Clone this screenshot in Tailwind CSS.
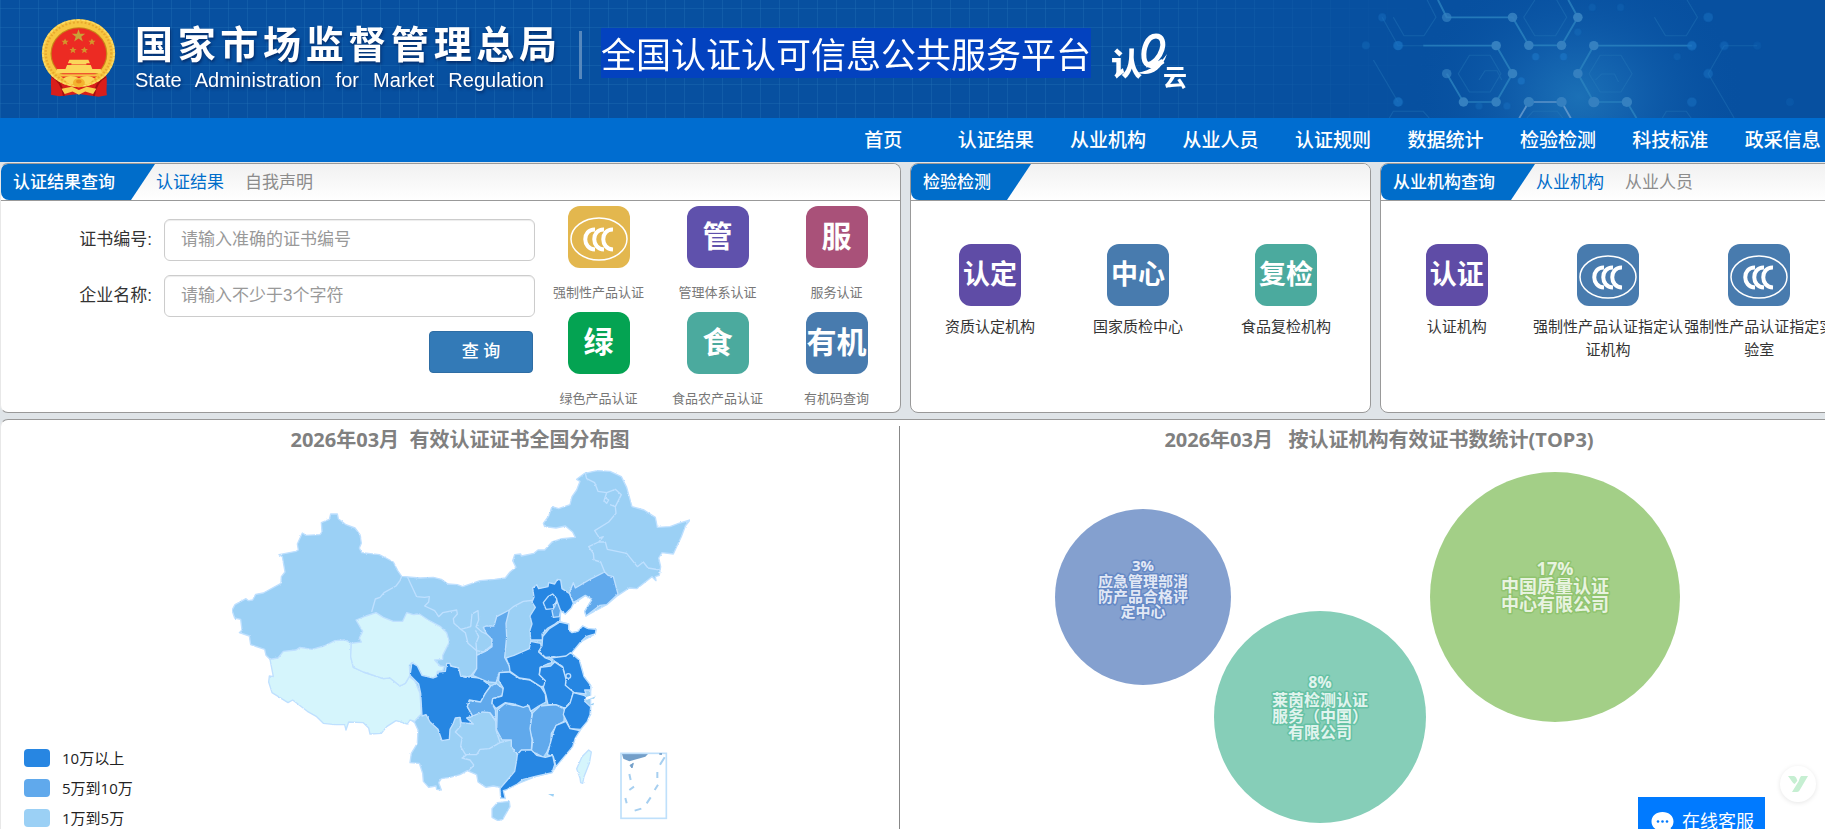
<!DOCTYPE html>
<html lang="zh-CN">
<head>
<meta charset="utf-8">
<meta name="viewport" content="width=device-width, initial-scale=1">
<title>全国认证认可信息公共服务平台</title>
<script src="https://cdn.jsdelivr.net/npm/@tailwindcss/browser@4"></script>
</head>
<body class="bg-[#dfe4e8] font-['Liberation_Sans','Noto_Sans_CJK_SC',sans-serif] text-[#333]">
<svg class="hidden" aria-hidden="true">
  <symbol id="ccc" viewBox="0 0 62 62">
    <g fill="none" stroke="#fff">
      <ellipse cx="31" cy="33" rx="28" ry="21" stroke-width="1.5"/>
      <path d="M27 23.5C14 23 14 43 27 43.500M36 23.500C23 23 23 43 36 43.500M45 23.500C32 23 32 43 45 43.500" stroke-width="4"/>
    </g>
  </symbol>
</svg>
<div class="h-screen overflow-hidden">
<div class="-mr-[14px] flex h-full flex-col">

  <header class="relative h-[118px] shrink-0 overflow-hidden bg-[#0750a0]">
    <svg class="absolute inset-0 h-full w-full" aria-hidden="true">
      <defs>
        <pattern id="grid" width="19" height="19" patternUnits="userSpaceOnUse" y="8"><path d="M0 .5H19M.5 0V19" stroke="#2573b8" stroke-opacity=".35" fill="none"/></pattern>
        <linearGradient id="fade"><stop offset=".6" stop-color="#fff"/><stop offset=".78" stop-color="#000"/></linearGradient>
        <mask id="gridMask"><rect width="100%" height="100%" fill="url(#fade)"/></mask>
      </defs>
      <rect width="100%" height="100%" fill="url(#grid)" mask="url(#gridMask)"/>
    </svg>
    <svg class="absolute top-0 right-[14px] h-[118px] w-[625px]" viewBox="0 0 1568 354" preserveAspectRatio="none" aria-hidden="true">
      <defs><radialGradient id="glow" gradientUnits="userSpaceOnUse" cx="950" cy="290" r="420"><stop offset="0" stop-color="#1b70b6"/><stop offset=".35" stop-color="#115fac"/><stop offset="1" stop-color="#0750a0" stop-opacity="0"/></radialGradient></defs>
      <rect width="1568" height="354" fill="url(#glow)"/>
      <g fill="none" stroke="#2b83c0" stroke-width="5" opacity=".8">
        <path d="M597 0L619 52H784L825 136H907L948 52L924 0"/>
        <path d="M560 137H743L784 221L743 306H661L619 221"/>
        <path d="M1234 137H988L948 221L988 306H1071L1095 354"/>
        <path d="M801 354L825 306H907L930 354" stroke="#6d9fd0"/>
      </g>
      <g fill="none" stroke="#2b7dbe" stroke-width="3" opacity=".35">
        <path d="M676 166H728L755 221L728 276H676L648 221ZM1004 166H1056L1084 221L1056 276H1004L976 221ZM812 52L840 0M812 52L840 107H892L920 52L895 0M485 52L512 107H562L592 52L570 0M1140 52L1168 107H1220L1248 52L1222 0M457 52L497 137H560M435 180L497 306M1315 137L1275 221L1340 354M1315 137H1398M820 354L836 334H896L910 354M475 354L485 334H560L575 354M1160 354L1170 334H1220L1232 354M700 240L715 212H745L757 240M992 240L1008 222H1040L1050 246"/>
      </g>
      <g fill="#3580c0">
        <ellipse cx="619" cy="52" rx="12" ry="14" opacity=".7"/><ellipse cx="784" cy="52" rx="12" ry="14" opacity=".9"/><ellipse cx="948" cy="52" rx="12" ry="14"/><ellipse cx="825" cy="136" rx="12" ry="14"/><ellipse cx="907" cy="136" rx="12" ry="14"/>
        <ellipse cx="743" cy="137" rx="12" ry="14"/><ellipse cx="784" cy="221" rx="12" ry="14"/><ellipse cx="743" cy="306" rx="12" ry="14"/><ellipse cx="661" cy="306" rx="12" ry="14"/><ellipse cx="619" cy="221" rx="12" ry="14" opacity=".7"/>
        <ellipse cx="988" cy="137" rx="12" ry="14"/><ellipse cx="948" cy="221" rx="12" ry="14"/><ellipse cx="988" cy="306" rx="14" ry="16"/><ellipse cx="1071" cy="306" rx="13" ry="15"/><ellipse cx="825" cy="306" rx="13" ry="15"/><ellipse cx="907" cy="306" rx="13" ry="15"/>
      </g>
      <g fill="#1c75c4" opacity=".7">
        <ellipse cx="497" cy="137" rx="12" ry="14"/><ellipse cx="497" cy="306" rx="12" ry="14"/><ellipse cx="457" cy="52" rx="10" ry="12" opacity=".6"/><ellipse cx="416" cy="136" rx="10" ry="12" opacity=".5"/><ellipse cx="1234" cy="137" rx="12" ry="14"/><ellipse cx="1275" cy="52" rx="12" ry="14" opacity=".7"/><ellipse cx="1275" cy="221" rx="12" ry="14" opacity=".7"/><ellipse cx="1234" cy="306" rx="12" ry="14" opacity=".7"/><ellipse cx="1315" cy="137" rx="11" ry="13" opacity=".6"/><ellipse cx="1398" cy="137" rx="10" ry="12" opacity=".3"/><ellipse cx="1480" cy="306" rx="10" ry="12" opacity=".3"/><ellipse cx="842" cy="170" rx="9" ry="11"/><ellipse cx="912" cy="170" rx="9" ry="11"/><ellipse cx="806" cy="243" rx="9" ry="11"/><ellipse cx="770" cy="318" rx="9" ry="11" opacity=".6"/><ellipse cx="700" cy="318" rx="9" ry="11" opacity=".5"/><ellipse cx="948" cy="96" rx="9" ry="11" opacity=".5"/><ellipse cx="984" cy="22" rx="9" ry="11" opacity=".4"/><ellipse cx="1055" cy="22" rx="9" ry="11" opacity=".4"/><ellipse cx="1197" cy="170" rx="9" ry="11" opacity=".4"/>
      </g>
    </svg>
    <div class="relative flex h-full items-start pl-[41px]">
      <svg class="mt-[18px] h-[80px] w-[75px] shrink-0" viewBox="104 54 190 242" preserveAspectRatio="none" role="img" aria-label="国徽">
        <path d="M132 222C126 250 132 268 129 286L150 291L200 284L250 292L271 288C268 262 274 250 268 222Z" fill="#d81e1a"/>
        <path d="M132 232C146 240 158 256 162 290M268 232C254 240 242 256 238 290" stroke="#a30f10" stroke-width="5" fill="none"/>
        <ellipse cx="199" cy="160" rx="93" ry="103" fill="#f7c640"/>
        <ellipse cx="199" cy="160" rx="83" ry="93" fill="none" stroke="#e8a92e" stroke-width="6" stroke-dasharray="5 5"/>
        <ellipse cx="199" cy="160" rx="90" ry="100" fill="none" stroke="#fbdc6b" stroke-width="4" stroke-dasharray="9 4"/>
        <ellipse cx="200" cy="162" rx="72" ry="80" fill="#c98418"/>
        <ellipse cx="200" cy="162" rx="69" ry="77" fill="#ec2b23"/>
        <path d="M199 88L203 102H216L206 111L210 125L199 116L188 125L192 111L182 102H195Z" fill="#c8a238"/>
        <g fill="#d3952c"><path d="M165 116L168 123H174L169 128L171 136L165 131L159 136L161 128L156 123H162Z"/><path d="M233 116L236 123H242L237 128L239 136L233 131L227 136L229 128L224 123H230Z"/><path d="M185 141L188 148H194L189 153L191 161L185 156L179 161L181 153L176 148H182Z"/><path d="M214 141L217 148H223L218 153L220 161L214 156L208 161L210 153L205 148H211Z"/></g>
        <path d="M176 180H224L228 191H172ZM181 191H219V195H181ZM170 196H230L234 208H166ZM145 208H255L259 221H141Z" fill="#fbd65a"/>
        <path d="M150 226H250L238 238H162Z" fill="#ec2b23"/>
        <path d="M142 224H258L244 231H156Z" fill="#f6c243"/>
        <path d="M160 238C172 226 186 228 200 236C214 228 228 226 240 238L222 256L200 248L178 256Z" fill="#fbd65a"/>
        <ellipse cx="200" cy="250" rx="15" ry="14" fill="#f3b32e"/><ellipse cx="200" cy="246" rx="7" ry="6" fill="#e9881d"/>
        <path d="M156 268L182 262L200 272L220 262L244 268L236 284L216 276L200 286L184 276L164 284Z" fill="#f9cf4d"/>
      </svg>
      <div class="mt-[21px] ml-[19px] w-[422px] shrink-0 text-white [text-shadow:1px_2px_3px_rgba(0,20,70,.6)]">
        <div class="text-[38px] leading-[48px] font-bold [text-align-last:justify]">国家市场监督管理总局</div>
        <div class="w-[409px] text-[20px] leading-[22px] [text-align-last:justify]">State Administration for Market Regulation</div>
      </div>
      <div class="mt-[31px] ml-[22px] h-[48px] w-[3px] shrink-0 bg-[#5688bd]"></div>
      <h1 class="mt-[28px] ml-[19px] shrink-0 bg-[#0342bf] pt-[6px] text-[35px] leading-[44px] whitespace-nowrap text-white">全国认证认可信息公共服务平台</h1>
      <svg class="mt-[22px] ml-[8px] h-[96px] w-[110px] shrink-0" viewBox="-10 -10 110 96" role="img" aria-label="认e云">
        <text x="2" y="43" font-size="31" font-weight="900" fill="#fff" font-family="'Noto Sans CJK SC',sans-serif">认</text>
        <path d="M24 41C36 41 50 34 58 22C53 37 44 42 36 42Z" fill="#fff"/>
        <path d="M37 33C53 31 60 4 47 4C38 4 34 17 35 26C36 35 45 36 54 29" fill="none" stroke="#fff" stroke-width="5"/>
        <text x="54" y="54" font-size="24" font-weight="700" fill="#fff" font-family="'Noto Sans CJK SC',sans-serif">云</text>
      </svg>
    </div>
  </header>

  <nav class="h-[44px] shrink-0 bg-[#006dd0] pt-[2px]" aria-label="主导航">
    <ul class="ml-auto grid h-full w-[1012px] grid-cols-9 items-center text-center text-[19px] font-medium text-white">
      <li><a href="#">首页</a></li><li><a href="#">认证结果</a></li><li><a href="#">从业机构</a></li><li><a href="#">从业人员</a></li><li><a href="#">认证规则</a></li><li><a href="#">数据统计</a></li><li><a href="#">检验检测</a></li><li><a href="#">科技标准</a></li><li><a href="#">政采信息</a></li>
    </ul>
  </nav>

  <main class="flex min-h-0 flex-1 flex-col gap-[6px] pt-px">
    <div class="grid shrink-0 grid-cols-[901fr_461fr_459fr] gap-[9px]">

      <section class="min-h-[250px] overflow-hidden rounded-lg border border-[#999] border-l-[#e8e8e8] bg-white">
        <div class="flex h-[37px] items-center border-b border-[#999] bg-linear-to-b from-[#f1f1f1] to-white text-[17px]">
          <h2 class="flex h-full items-center rounded-bl-lg bg-[#006dca] pt-px pr-10 pl-3 font-medium text-white [clip-path:polygon(0_0,100%_0,calc(100%-24px)_100%,0_100%)]">认证结果查询</h2>
          <button type="button" class="ml-px pt-px text-[#006dca]">认证结果</button>
          <button type="button" class="ml-[21px] pt-px text-[#8c8c8c]">自我声明</button>
        </div>
        <div class="flex">
          <form class="flex flex-1 flex-col items-end gap-[14px] pt-[18px] pr-1 text-[17px]">
            <div class="flex items-center gap-3"><label for="cert">证书编号:</label><input id="cert" type="text" placeholder="请输入准确的证书编号" class="h-[42px] w-[371px] rounded-md border border-[#ccc] px-4 shadow-[inset_0_1px_1px_rgba(0,0,0,.075)] placeholder:text-[#999]"></div>
            <div class="flex items-center gap-3"><label for="corp">企业名称:</label><input id="corp" type="text" placeholder="请输入不少于3个字符" class="h-[42px] w-[371px] rounded-md border border-[#ccc] px-4 shadow-[inset_0_1px_1px_rgba(0,0,0,.075)] placeholder:text-[#999]"></div>
            <button type="submit" class="mr-[2px] h-[42px] w-[104px] rounded border border-[#2e6da4] bg-[#337ab7] font-medium text-white">查 询</button>
          </form>
          <ul class="grid w-[361px] grid-cols-3 gap-y-[10px] pt-[5px] pr-1 text-center text-[13px] leading-[18px] text-[#777]">
            <li><a href="#" class="flex flex-col items-center gap-4"><span class="flex size-[62px] items-center justify-center rounded-xl bg-[#e3b74e]"><svg class="size-full"><use href="#ccc"/></svg></span>强制性产品认证</a></li>
            <li><a href="#" class="flex flex-col items-center gap-4"><span class="flex size-[62px] items-center justify-center rounded-xl bg-[#5f51ac] text-[30px] font-bold text-white">管</span>管理体系认证</a></li>
            <li><a href="#" class="flex flex-col items-center gap-4"><span class="flex size-[62px] items-center justify-center rounded-xl bg-[#a95179] text-[30px] font-bold text-white">服</span>服务认证</a></li>
            <li><a href="#" class="flex flex-col items-center gap-4"><span class="flex size-[62px] items-center justify-center rounded-xl bg-[#04a352] text-[30px] font-bold text-white">绿</span>绿色产品认证</a></li>
            <li><a href="#" class="flex flex-col items-center gap-4"><span class="flex size-[62px] items-center justify-center rounded-xl bg-[#4baa9e] text-[30px] font-bold text-white">食</span>食品农产品认证</a></li>
            <li><a href="#" class="flex flex-col items-center gap-4"><span class="flex size-[62px] items-center justify-center rounded-xl bg-[#487bae] text-[30px] font-bold text-white">有机</span>有机码查询</a></li>
          </ul>
        </div>
      </section>

      <section class="overflow-hidden rounded-lg border border-[#999] bg-white">
        <div class="flex h-[37px] items-center border-b border-[#999] bg-linear-to-b from-[#f1f1f1] to-white text-[17px]">
          <h2 class="flex h-full items-center rounded-bl-lg bg-[#006dca] pt-px pr-10 pl-3 font-medium text-white [clip-path:polygon(0_0,100%_0,calc(100%-24px)_100%,0_100%)]">检验检测</h2>
        </div>
        <ul class="grid grid-cols-3 pt-[43px] pr-[10px] pl-[5px] text-center text-[15px] leading-[23px]">
          <li><a href="#" class="flex flex-col items-center gap-[9px]"><span class="flex size-[62px] items-center justify-center rounded-xl bg-[#5f4ca6] text-[27px] font-bold text-white">认定</span>资质认定机构</a></li>
          <li><a href="#" class="flex flex-col items-center gap-[9px]"><span class="flex size-[62px] items-center justify-center rounded-xl bg-[#487bae] text-[27px] font-bold text-white">中心</span>国家质检中心</a></li>
          <li><a href="#" class="flex flex-col items-center gap-[9px]"><span class="flex size-[62px] items-center justify-center rounded-xl bg-[#4baa9e] text-[27px] font-bold text-white">复检</span>食品复检机构</a></li>
        </ul>
      </section>

      <section class="overflow-hidden rounded-lg border border-[#999] bg-white">
        <div class="flex h-[37px] items-center border-b border-[#999] bg-linear-to-b from-[#f1f1f1] to-white text-[17px]">
          <h2 class="flex h-full items-center rounded-bl-lg bg-[#006dca] pt-px pr-10 pl-3 font-medium text-white [clip-path:polygon(0_0,100%_0,calc(100%-24px)_100%,0_100%)]">从业机构查询</h2>
          <button type="button" class="ml-px pt-px text-[#006dca]">从业机构</button>
          <button type="button" class="ml-[21px] pt-px text-[#8c8c8c]">从业人员</button>
        </div>
        <ul class="grid grid-cols-3 pt-[43px] pr-[3px] text-center text-[15px] leading-[23px]">
          <li><a href="#" class="flex flex-col items-center gap-[9px]"><span class="flex size-[62px] items-center justify-center rounded-xl bg-[#5f4ca6] text-[27px] font-bold text-white">认证</span>认证机构</a></li>
          <li><a href="#" class="flex flex-col items-center gap-[9px]"><span class="flex size-[62px] items-center justify-center rounded-xl bg-[#487bae]"><svg class="size-full"><use href="#ccc"/></svg></span>强制性产品认证指定认证机构</a></li>
          <li><a href="#" class="flex flex-col items-center gap-[9px]"><span class="flex size-[62px] items-center justify-center rounded-xl bg-[#487bae]"><svg class="size-full"><use href="#ccc"/></svg></span>强制性产品认证指定实验室</a></li>
        </ul>
      </section>
    </div>

    <div class="grid min-h-0 flex-1 grid-cols-[901fr_938fr] overflow-hidden rounded-t-lg border border-b-0 border-[#999] border-l-[#e8e8e8] bg-white">
      <section class="pt-[5px]">
        <h2 class="pl-5 text-center font-['Open_Sans','Noto_Sans_CJK_SC',sans-serif] text-[20px] leading-[30px] font-bold whitespace-pre text-[#808080]">2026年03月  有效认证证书全国分布图</h2>
        <div class="flex">
          <ul class="w-[219px] shrink-0 pt-[288px] pl-[23px] font-['Open_Sans','Noto_Sans_CJK_SC',sans-serif] text-[15px] leading-[30px] text-[#222]">
            <li class="flex items-center gap-3"><span class="h-[18px] w-[26px] rounded bg-[#2786e2]"></span>10万以上</li>
            <li class="flex items-center gap-3"><span class="h-[18px] w-[26px] rounded bg-[#60a9ec]"></span>5万到10万</li>
            <li class="flex items-center gap-3"><span class="h-[18px] w-[26px] rounded bg-[#9bd0f5]"></span>1万到5万</li>
          </ul>
          <svg class="h-[374px] w-[500px] shrink-0" viewBox="0 135 1500 1122" role="img" aria-label="有效认证证书全国分布图">
            <defs><filter id="rough" x="0" y="0" width="1" height="1"><feTurbulence type="fractalNoise" baseFrequency=".14" numOctaves="2" seed="4"/><feDisplacementMap in="SourceGraphic" scale="6" xChannelSelector="R" yChannelSelector="G"/></filter></defs>
            <g filter="url(#rough)" stroke="#bfe0ff" stroke-width="4" stroke-linejoin="round">
              <!-- mainland -->
              <path fill="#9bd0f5" d="M36 601L45 584L78 566L85 572L98 570L107 553L130 549L183 520L184 500L195 486L187 440L177 434L228 424L235 420L232 402L247 369L258 376L300 374L306 366L304 338L328 328L332 312L352 312L355 326L378 344L405 354L420 374L424 400L418 414L425 428L478 434L498 444L520 456L533 482L545 499L600 504L640 502L664 508L684 522L712 524L728 530L780 512L824 508L856 504L870 486L888 472L878 452L884 434L902 432L904 438L942 430L954 420L974 420L996 396L1026 386L1066 382L1058 366L1036 348L1008 354L974 350L970 340L986 318L996 290L1016 296L1050 284L1056 260L1070 240L1080 214L1070 208L1094 190L1132 182L1170 184L1204 200L1220 232L1236 290L1272 300L1306 322L1312 352L1350 350L1376 340L1410 330L1396 348L1384 380L1370 410L1360 432L1326 428L1316 444L1322 470L1318 496L1306 500L1308 512L1296 500L1276 516L1250 536L1228 534L1194 556L1160 584L1098 618L1094 604L1116 568L1096 556L1062 580L1036 612L1022 602L1020 636L1046 642L1046 660L1056 668L1074 664L1088 648L1104 656L1128 658L1126 672L1082 696L1052 728L1078 750L1092 800L1112 826L1112 914L1082 958L1008 1070L996 1088L952 1098L892 1122L848 1134L820 1128L798 1132L774 1116L770 1094L742 1082L720 1094L690 1102L664 1106L656 1118L664 1140L650 1138L648 1128L626 1132L610 1114L608 1090L598 1060L570 1058L574 1030L592 1000L594 960L584 938L400 800L150 748L138 736L134 718L92 704L88 678L58 668L66 660L62 628L44 624Z"/>
              <!-- Tibet, Qinghai -->
              <path fill="#d5f5fc" d="M150 748L160 800L148 798L146 816L156 848L204 878L218 870L262 904L290 920L310 940L345 944L374 944L378 960L386 936L430 938L446 954L450 972L484 970L500 950L528 932L562 942L570 930L584 934L592 924L604 912L600 850L584 812L568 800L556 820L540 828L510 804L490 806L430 786L400 772L392 740L394 700L375 690L345 692L312 708L276 718L240 712L228 720L190 724L174 744Z"/>
              <path fill="#d5f5fc" d="M394 700L424 696L418 684L428 664L408 630L438 618L468 608L490 622L520 634L548 634L560 608L580 614L598 612L625 630L662 650L680 668L688 696L668 736L668 748L644 750L660 768L672 770L668 782L652 784L650 796L640 804L606 796L592 768L576 758L568 766L570 796L556 820L540 828L510 804L490 806L430 786L400 772L392 740Z"/>
              <!-- Sichuan -->
              <path fill="#2786e2" d="M576 758L592 768L606 796L640 804L650 800L656 786L676 784L680 760L690 760L692 768L716 774L722 798L780 804L812 828L796 850L782 876L748 870L742 890L758 918L740 924L760 942L724 938L720 922L706 924L700 940L690 958L688 988L666 992L654 958L630 936L618 914L606 918L602 850L596 822L570 796Z"/>
              <!-- province borders in the west and north -->
              <path fill="none" d="M545 499L540 512L528 528L492 548L480 562L466 567L455 606M562 500L576 530L590 560L614 562L628 560L626 576L614 588L644 602L656 620L668 608L710 600L712 612L700 626L702 640L722 658L752 650L756 612L774 602L776 630L768 650L786 666L816 680L816 706L790 726L770 722L768 700L776 680L766 660M720 656L736 668L744 700L770 722V776L752 798L736 802L722 798M720 922L722 948L706 966L726 984L722 1010L738 1036L726 1044L750 1050L762 1066L746 1082M738 1034L770 1034L780 1018L808 1016L840 998L870 990M826 900L828 960L840 998M758 918L786 904L810 908L828 936"/>
              <g transform="translate(720 0)">
                <path fill="none" d="M376 190L380 206L404 218L414 244L440 248L466 238L484 254L466 290L468 310L446 336L404 362L418 384L430 380L416 396L386 410L400 430L402 450L422 456L434 486M436 396L442 418L500 430L532 470L550 456L564 474L600 480M434 262L446 270L440 280L432 272L440 248M466 290L450 284M416 396H436M148 600L160 590L190 574L226 570"/>
                <g fill="#60a9ec">
                  <path d="M70 652L78 648L102 648L110 620L148 600L138 640L140 680L134 742L148 768L150 786L118 788L108 818L84 816L38 796L50 776L50 736L76 724L96 710L96 688L80 672Z"/>
                  <path d="M328 548L340 518L346 534L390 508L434 486L444 496L460 500L474 552L440 584L420 586L378 618L374 604L396 568L376 556L340 578Z"/>
                  <path d="M92 828L108 820L130 836L126 858L98 866L96 880L106 900L108 932L90 908L66 906L38 918L22 890L28 872L62 876L76 850Z"/>
                  <path d="M218 908L240 888L288 884L314 898L312 934L290 946L274 970L272 1000L260 1028L250 1042L228 1030L214 1026L218 990L208 960Z"/>
                  <path d="M112 900L136 880L160 886L206 888L216 912L210 956L216 990L214 1020L182 1022L172 1034L154 1010L154 990L126 990L110 960Z"/>
                </g>
                <g fill="#2786e2">
                  <path d="M118 788L148 786L180 806L210 810L242 830L256 852L258 876L236 888L212 904L206 886L190 892L160 882L136 878L108 896L96 880L98 866L126 858L130 834L116 812Z"/>
                  <path d="M138 744L162 736L208 716L212 694L242 700L244 712L236 726L256 744L272 750L276 758L262 762L240 772L238 794L256 810L256 828L242 830L208 808L178 804L150 784L148 768Z"/>
                  <path d="M218 534L230 524L236 536L264 530L266 518L284 522L292 508L302 510L306 536L328 550L340 580L334 594L316 612L302 602L300 630L282 644L264 654L246 672L248 690L212 690L210 660L216 642L210 618L226 592L216 576L222 562Z"/>
                  <path d="M300 636L326 642L326 660L336 668L354 664L368 648L384 656L408 658L406 672L390 676L378 680L362 696L334 730L318 740L300 746L282 740L256 742L236 724L246 708L248 680L268 656Z"/>
                  <path d="M272 744L318 738L332 728L358 750L372 800L392 826L392 840L374 840L378 852L344 848L326 844L316 826L318 808L308 770L284 754Z"/>
                  <path d="M284 756L308 772L318 808L316 826L340 846L332 876L314 894L288 884L264 884L258 856L250 832L256 812L238 794L242 772L272 768Z"/>
                  <path d="M340 848L372 856L380 862L374 874L392 890L390 914L382 934L362 958L330 956L320 934L310 914L314 896L330 880Z"/>
                  <path d="M318 934L330 956L360 962L346 984L338 1010L308 1046L288 1070L280 1040L262 1034L272 996L280 966L288 946Z"/>
                  <path d="M172 1034L184 1020L214 1020L230 1036L256 1042L278 1036L284 1064L276 1088L232 1098L190 1108L172 1122L138 1140L130 1142L136 1166L122 1164L120 1136L142 1110L164 1084L170 1050Z"/>
                  <path d="M250 578L264 560L278 552L290 566L290 578L280 584L282 596L258 598Z"/>
                  <circle cx="325" cy="798" r="7"/>
                </g>
                <path fill="#60a9ec" d="M290 570L298 592L302 602L298 620L280 622L276 602L284 590Z"/>
                <path fill="#9bd0f5" d="M96 1196L112 1178L148 1174L150 1190L128 1228L114 1232L96 1222Z"/>
                <path fill="#d5f5fc" d="M386 1020L394 1026L388 1060L372 1100L368 1120L362 1118L360 1104L350 1076L366 1040Z"/>
                <path fill="#fff" stroke="#fff" stroke-width="3" d="M380 862L396 858L392 864L380 868Z"/>
                <path fill="#9bd0f5" stroke="none" d="M264 1152L282 1152L280 1160ZM390 866L404 860L408 856L402 866ZM390 884L402 878L400 886Z"/>
              </g>
            </g>
            <g transform="translate(720 0)">
              <path d="M486 1032H564L556 1040L508 1054L490 1046Z" fill="#739fc9"/>
              <rect x="483" y="1030" width="136" height="195" fill="none" stroke="#bfe0fb" stroke-width="5"/>
              <path d="M510 1066L520 1060L516 1074Z" fill="#739fc9" stroke="#739fc9" stroke-width="3"/>
              <path d="M598 1032H606" stroke="#739fc9" stroke-width="5"/>
              <path d="M508 1092L512 1110M508 1140L522 1130M496 1164L500 1180M524 1202L544 1196M560 1180L572 1162M584 1140L594 1124M592 1104V1086M600 1064L614 1042" fill="none" stroke="#a6cff0" stroke-width="6"/>
            </g>
          </svg>
        </div>
      </section>

      <section class="mt-[6px] border-l border-[#888]">
        <h2 class="-mt-px pl-5 text-center font-['Open_Sans','Noto_Sans_CJK_SC',sans-serif] text-[20px] leading-[30px] font-bold whitespace-pre text-[#808080]">2026年03月   按认证机构有效证书数统计(TOP3)</h2>
        <svg class="h-[374px] w-[938px]" viewBox="901 455 938 374" role="img" aria-label="按认证机构有效证书数统计">
          <circle cx="1144" cy="597" r="88" fill="#84a0cf"/>
          <circle cx="1321" cy="717" r="106" fill="#86ceb8"/>
          <circle cx="1556" cy="597" r="125" fill="#a3cf87"/>
          <g class="font-['Open_Sans','Noto_Sans_CJK_SC',sans-serif] font-bold" text-anchor="middle" stroke-width="3" paint-order="stroke" stroke-linejoin="round">
            <g font-size="15" fill="#e2e8f5" stroke="#6589c6"><text x="1144" y="571">3%</text><text x="1144" y="587">应急管理部消</text><text x="1144" y="602">防产品合格评</text><text x="1144" y="617">定中心</text></g>
            <g font-size="16" fill="#e1f4ee" stroke="#66c2a5"><text x="1321" y="688">8%</text><text x="1321" y="706">莱茵检测认证</text><text x="1321" y="722">服务（中国）</text><text x="1321" y="738">有限公司</text></g>
            <g font-size="18" fill="#e8f3e0" stroke="#90c46f"><text x="1556" y="575">17%</text><text x="1556" y="593">中国质量认证</text><text x="1556" y="611">中心有限公司</text></g>
          </g>
        </svg>
      </section>
    </div>
  </main>
</div>
</div>

<button type="button" aria-label="助手" class="fixed right-[9px] bottom-[27px] flex size-[36px] items-center justify-center rounded-full bg-white shadow-[0_1px_5px_rgba(0,0,0,.1)]">
  <svg class="h-[16px] w-[20px]" viewBox="0 0 60 48" aria-hidden="true"><path d="M0 0H18C24 2 26 8 28 14L20 24C14 22 8 10 0 0ZM40 0H60L34 44Q31 48 26 48H12L32 16Q36 2 40 0Z" fill="#c6efd2"/></svg>
</button>
<button type="button" class="fixed right-[60px] -bottom-[18px] flex h-[50px] w-[127px] items-center gap-2 bg-[#007aff] pl-[13px] text-[18px] whitespace-nowrap text-white">
  <svg class="h-[22px] w-[23px] shrink-0" viewBox="0 0 23 22" aria-hidden="true"><path d="M11.500 1C5 1 .5 5 .5 10.500S5 20 11.500 20H21L19.500 17C21.500 15.500 22.500 13 22.500 10.500C22.500 5 18 1 11.500 1Z" fill="#fff"/><g fill="#007aff"><circle cx="7" cy="10.500" r="1.300"/><circle cx="11.500" cy="10.500" r="1.300"/><circle cx="16" cy="10.500" r="1.300"/></g></svg>在线客服
</button>
</body>
</html>
